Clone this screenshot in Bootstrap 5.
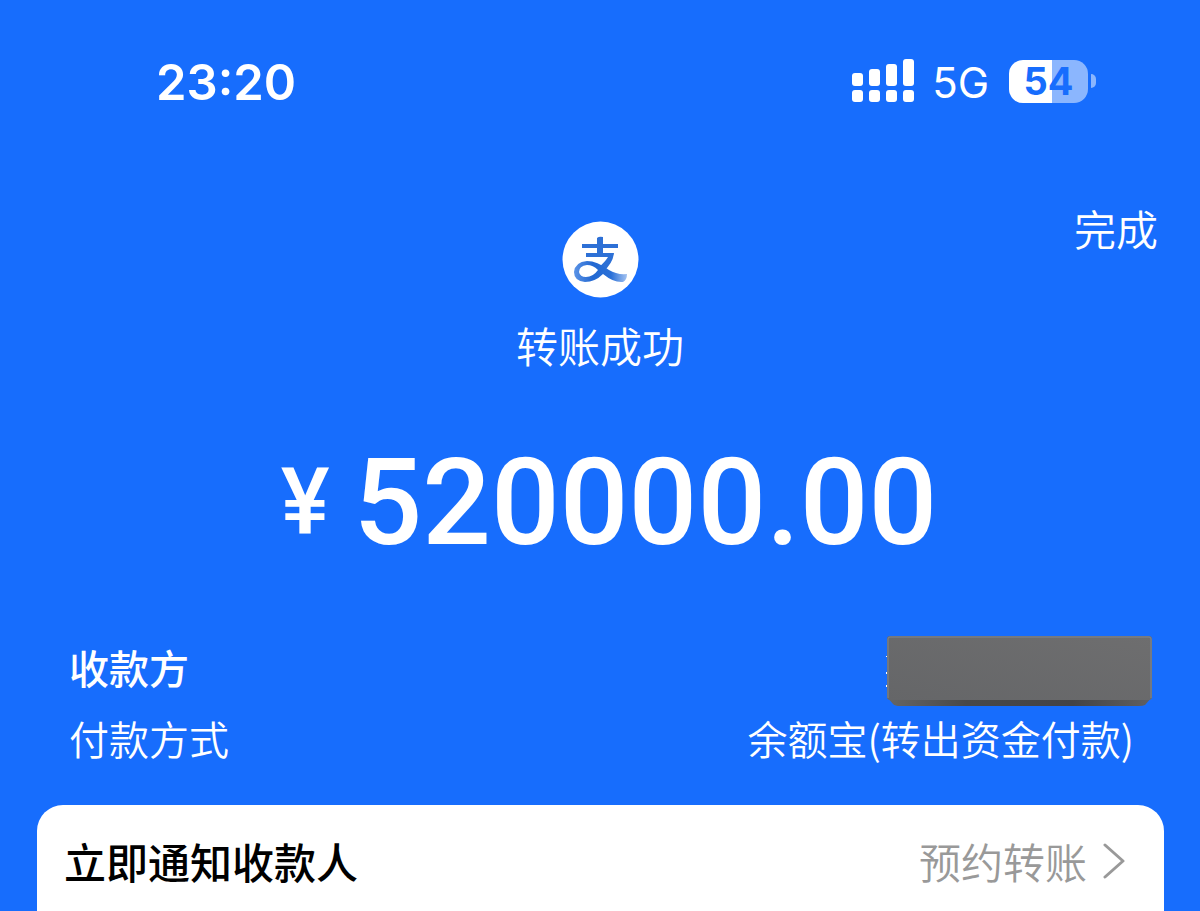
<!DOCTYPE html>
<html lang="zh-CN">
<head>
<meta charset="utf-8">
<meta name="viewport" content="width=device-width, initial-scale=1">
<title>转账成功</title>
<link href="https://cdn.jsdelivr.net/npm/bootstrap@5.3.0/dist/css/bootstrap.min.css" rel="stylesheet">
<style>
  body { background: #176dfd; color: #fff; font-family: "Liberation Sans", "Noto Sans CJK SC", sans-serif; overflow-x: hidden; }
  .cjk { font-family: "Noto Sans CJK SC", sans-serif; }
  .status { height: 162px; padding: 0 104px 0 156px; font-family: Inter, sans-serif; }
  .clock { font-size: 49px; font-weight: 600; line-height: 60px; padding-top: 4px; }
  .network { font-size: 42px; line-height: 60px; margin-left: 18px; margin-right: 20px; padding-top: 4px; }
  .battery { width: 79px; height: 43px; border-radius: 14px; background: linear-gradient(90deg, #fff 54%, #8bb6fe 54%); color: #176dfd; font-size: 38px; font-weight: 700; line-height: 43px; }
  .nub { width: 5px; height: 14px; margin-left: 3px; border-radius: 0 5px 5px 0; background: #8bb6fe; }
  .fs-l { font-size: 42px; line-height: 60px; }
  .fs-m { font-size: 40px; line-height: 60px; }
  .light { font-weight: 350; }
  .medium { font-weight: 500; }
  .done { top: 36px; right: 42px; }
  .logo { margin-top: 59px; }
  .result { margin-top: 17px; }
  .amount { font-family: Roboto, sans-serif; font-weight: 500; margin-top: 56px; padding-left: 18px; }
  .amount .sign { font-size: 92px; line-height: 144px; }
  .amount .value { font-size: 121px; line-height: 144px; }
  .details { padding: 62px 48px 0 69px; }
  .details .row-line { min-height: 71px; }
  .paid { padding-right: 18px; }
  .mask { width: 266px; height: 70px; margin-top: -1px; }
  .sheet { margin: 37px 36px 0 37px; min-height: 106px; padding: 26px 39px 20px 27px; border-radius: 26px 26px 0 0; background: #fff; color: #000; }
  .later { color: #999; }
</style>
</head>
<body>
<header class="status d-flex align-items-center justify-content-between">
  <time class="clock">23:20</time>
  <div class="d-flex align-items-center">
    <svg width="62" height="44" viewBox="0 0 62 44" fill="#fff" role="img" aria-label="信号">
      <rect x="0" y="14" width="11" height="13" rx="3"/><rect x="17" y="10" width="11" height="17" rx="3"/><rect x="34" y="5" width="11" height="22" rx="3"/><rect x="51" y="0" width="11" height="27" rx="3"/>
      <rect x="0" y="31" width="11" height="12" rx="3"/><rect x="17" y="31" width="11" height="12" rx="3"/><rect x="34" y="31" width="11" height="12" rx="3"/><rect x="51" y="31" width="11" height="12" rx="3"/>
    </svg>
    <span class="network">5G</span>
    <span class="battery text-center">54</span><span class="nub"></span>
  </div>
</header>

<main class="cjk">
  <section class="position-relative d-flex flex-column align-items-center">
    <button type="button" class="done btn p-0 border-0 text-white position-absolute fs-l light">完成</button>
    <svg class="logo" width="77" height="77" viewBox="0 0 77 77" role="img" aria-label="支付宝">
      <defs><linearGradient id="ink" x1="12" y1="0" x2="65" y2="0" gradientUnits="userSpaceOnUse">
        <stop offset="0" stop-color="#5b93e6"/><stop offset=".35" stop-color="#2268d2"/><stop offset=".7" stop-color="#2a70d8"/><stop offset="1" stop-color="#a3c2f0"/></linearGradient></defs>
      <circle cx="38.500" cy="38.500" r="38" fill="#fff"/>
      <path fill="#2d70d6" d="M35 17Q37 15 41 16V23H56V27H41V32H52Q51 42 41 51L36 47Q43 41 46 36H24V32H35V27H20V23H35Z"/>
      <path fill="url(#ink)" fill-rule="evenodd" d="M25 40Q35 40 47 49Q55 54 65 53Q65 59 61 61Q52 62 41 53Q33 61 23 61Q12 60 12 51Q13 41 25 40ZM25 44Q17 45 17 51Q18 56 24 56Q31 56 36 49Q31 44 25 44Z"/>
    </svg>
    <h1 class="result mb-0 fs-l light">转账成功</h1>
    <div class="amount d-flex justify-content-center align-items-center text-nowrap">
      <span class="sign me-4">¥</span><span class="value">520000.00</span>
    </div>
  </section>

  <dl class="details mb-0">
    <div class="row-line d-flex justify-content-between align-items-start">
      <dt class="fs-m medium">收款方</dt>
      <dd class="mb-0">
        <svg class="mask d-block" viewBox="0 0 266 70" role="img" aria-label="已遮挡">
          <defs>
            <linearGradient id="face" x1="0" y1="1" x2="1" y2="0"><stop offset="0" stop-color="#656668"/><stop offset="1" stop-color="#6e6e6f"/></linearGradient>
            <linearGradient id="edge" x1="0" y1="0" x2="1" y2="0"><stop offset="0" stop-color="#666"/><stop offset=".3" stop-color="#484848"/><stop offset=".7" stop-color="#434345"/><stop offset="1" stop-color="#606062"/></linearGradient>
          </defs>
          <path fill="#fff" d="M0 20h2v1H0zM0 36h2v2H0zM0 49h2v2H0z"/>
          <path fill="url(#edge)" d="M1 61H266L259 69Q257 70 253 70H14Q9 70 7 68Z"/>
          <rect x="1" y="0" width="265" height="64" rx="3" fill="url(#face)"/>
          <path fill="none" stroke="#7f8794" d="M2 62V3Q2 1 4 1H263Q265 1 265 3V62"/>
        </svg>
      </dd>
    </div>
    <div class="d-flex justify-content-between">
      <dt class="fs-m light">付款方式</dt>
      <dd class="paid mb-0 fs-m light">余额宝(转出资金付款)</dd>
    </div>
  </dl>

  <section class="sheet d-flex justify-content-between align-items-start">
    <h2 class="mb-0 fs-l medium">立即通知收款人</h2>
    <a href="#" class="later text-decoration-none d-flex align-items-center fs-l light">预约转账
      <svg class="ms-3" width="22" height="36" viewBox="0 0 22 36" fill="none" stroke="#999" stroke-width="3" stroke-linecap="round" stroke-linejoin="round" aria-hidden="true"><path d="M2 2L20 18L2 34"/></svg>
    </a>
  </section>
</main>
<script src="https://cdn.jsdelivr.net/npm/bootstrap@5.3.0/dist/js/bootstrap.bundle.min.js"></script>
</body>
</html>
